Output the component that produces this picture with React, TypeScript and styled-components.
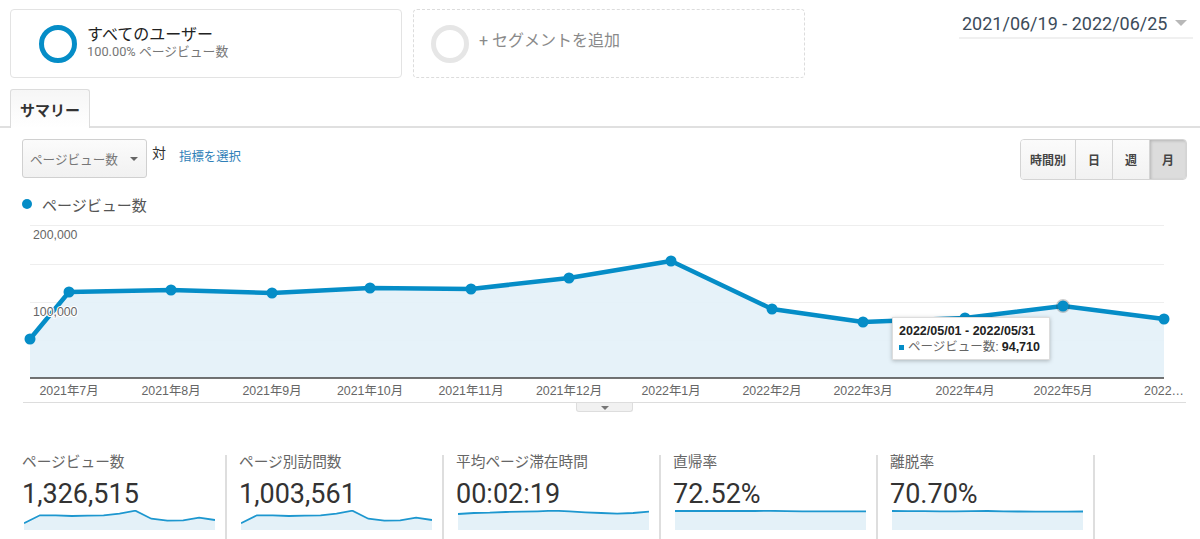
import * as React from 'react'
import styled, { createGlobalStyle } from 'styled-components'

const BLUE = '#058dc7'
const FILL = '#e4f1f8'

const GlobalStyle = createGlobalStyle`
  html, body {
    margin: 0;
    padding: 0;
    background: #fff;
    overflow: hidden;
  }
  body {
    font-family: Roboto, 'Noto Sans CJK JP', sans-serif;
    color: #333;
  }
`

const points: [number, number][] = [
  [30, 339], [69, 292], [171, 290], [272, 293], [370, 288], [471, 289], [569, 278],
  [671, 261], [772, 309], [863, 322], [965, 318], [1063, 306], [1164, 319],
]

const axisLabels: [string, number][] = [
  ['2021年7月', 69], ['2021年8月', 171], ['2021年9月', 272], ['2021年10月', 370],
  ['2021年11月', 471], ['2021年12月', 569], ['2022年1月', 671], ['2022年2月', 772],
  ['2022年3月', 863], ['2022年4月', 965], ['2022年5月', 1063], ['2022…', 1164],
]

const pageviewSpark = [13.3, 5.3, 5.3, 6, 5.7, 5.3, 3.7, 0.7, 8.7, 10.7, 10.3, 7.7, 10]

const metrics = [
  { label: 'ページビュー数', value: '1,326,515', spark: pageviewSpark },
  { label: 'ページ別訪問数', value: '1,003,561', spark: pageviewSpark },
  { label: '平均ページ滞在時間', value: '00:02:19', spark: [4, 3, 2.7, 2, 1.7, 1.3, 0.7, 1.3, 2.3, 3, 3.7, 3, 1.7] },
  { label: '直帰率', value: '72.52%', spark: [1, 1, 1, 1, 1, 1, 0.8, 1.2, 1.3, 1.3, 1.4, 1.4, 1.4] },
  { label: '離脱率', value: '70.70%', spark: [1, 1.1, 1.2, 1.3, 1.3, 1.2, 1, 1.4, 1.5, 1.6, 1.7, 1.7, 1.5] },
]

const Sparkline: React.FC<{ values: number[] }> = ({ values }) => {
  const step = 191 / (values.length - 1)
  const line = values.map((v, i) => `${(i * step).toFixed(1)},${v}`).join(' ')
  return (
    <SparkSvg width={191} height={20} viewBox="0 0 191 20">
      <polygon points={`0,20 ${line} 191,20`} fill={FILL} />
      <polyline points={line} fill="none" stroke="#1d97cf" strokeWidth={1.8} />
    </SparkSvg>
  )
}

const App: React.FC = () => {
  const linePoints = points.map(p => p.join(',')).join(' ')
  return (
    <Page>
      <GlobalStyle />
      <TopRow>
        <SegmentCard>
          <Ring $color={BLUE} />
          <SegmentText>
            <SegmentName>すべてのユーザー</SegmentName>
            <SegmentSub>100.00% ページビュー数</SegmentSub>
          </SegmentText>
        </SegmentCard>
        <AddSegmentCard>
          <Ring $color="#e6e6e6" />
          <AddLabel>+ セグメントを追加</AddLabel>
        </AddSegmentCard>
        <DateRange>
          2021/06/19 - 2022/06/25
          <DateCaret />
        </DateRange>
      </TopRow>

      <TabBar>
        <Tab>サマリー</Tab>
      </TabBar>

      <Controls>
        <MetricSelect>
          ページビュー数
          <SelectCaret />
        </MetricSelect>
        <VsLabel>対</VsLabel>
        <MetricLink>指標を選択</MetricLink>
        <Periods>
          <PeriodButton>時間別</PeriodButton>
          <PeriodButton>日</PeriodButton>
          <PeriodButton>週</PeriodButton>
          <PeriodButton $active>月</PeriodButton>
        </Periods>
      </Controls>

      <Legend>
        <LegendDot />
        ページビュー数
      </Legend>

      <ChartWrap>
        <svg width={1163} height={180} viewBox="23 222 1163 180">
          {[225, 264, 302, 340].map(y => (
            <line key={y} x1={30} x2={1164} y1={y + 0.5} y2={y + 0.5} stroke="#eeeeee" />
          ))}
          <polygon points={`30,378 ${linePoints} 1164,378`} fill={FILL} fillOpacity={0.92} />
          <line x1={30} x2={1164} y1={378} y2={378} stroke="#444" strokeWidth={1.4} />
          <polyline points={linePoints} fill="none" stroke={BLUE} strokeWidth={4.5} strokeLinejoin="round" />
          <circle cx={1063} cy={306} r={7} fill="#333" fillOpacity={0.25} />
          {points.map(([x, y]) => (
            <circle key={x} cx={x} cy={y} r={5.5} fill={BLUE} />
          ))}
          <YLabel x={33} y={239}>200,000</YLabel>
          <YLabel x={33} y={316}>100,000</YLabel>
          {axisLabels.map(([text, x]) => (
            <XLabel key={text} x={x} y={395}>{text}</XLabel>
          ))}
        </svg>
        <Tooltip>
          <TooltipDate>2022/05/01 - 2022/05/31</TooltipDate>
          <TooltipRow>
            <TooltipSwatch />
            ページビュー数: <strong>94,710</strong>
          </TooltipRow>
        </Tooltip>
      </ChartWrap>

      <HandleRow>
        <Handle />
      </HandleRow>

      <Metrics>
        {metrics.map(m => (
          <Metric key={m.label}>
            <MetricLabel>{m.label}</MetricLabel>
            <MetricValue>{m.value}</MetricValue>
            <Sparkline values={m.spark} />
          </Metric>
        ))}
      </Metrics>
    </Page>
  )
}

const Page = styled.div`
  width: 1200px;
  height: 539px;
  overflow: hidden;
`

const TopRow = styled.div`
  display: flex;
  align-items: flex-start;
  gap: 11px;
  padding: 9px 7px 0 10px;
`

const SegmentCard = styled.div`
  box-sizing: border-box;
  display: flex;
  align-items: center;
  width: 392px;
  height: 69px;
  padding-left: 28px;
  border: 1px solid #e3e3e3;
  border-radius: 4px;
`

const AddSegmentCard = styled(SegmentCard)`
  width: 392px;
  padding-left: 17px;
  border: 1px dashed #dcdcdc;
`

const Ring = styled.div<{ $color: string }>`
  box-sizing: border-box;
  flex-shrink: 0;
  width: 38px;
  height: 38px;
  margin-right: 10px;
  border: 5px solid ${p => p.$color};
  border-radius: 50%;
`

const SegmentText = styled.div`
  display: flex;
  flex-direction: column;
  margin-top: -2px;
`

const SegmentName = styled.div`
  font-size: 16px;
  line-height: 19px;
  color: #222;
`

const SegmentSub = styled.div`
  font-size: 12.8px;
  line-height: 16px;
  color: #777;
`

const AddLabel = styled.div`
  margin-top: -10px;
  font-size: 16px;
  color: #8a8a8a;
`

const DateRange = styled.div`
  display: flex;
  align-items: center;
  box-sizing: border-box;
  width: 234px;
  height: 30px;
  margin-left: auto;
  padding-left: 3px;
  border-bottom: 2px solid #f0f0f0;
  font-size: 18px;
  white-space: nowrap;
  color: #3c4b5a;
`

const DateCaret = styled.span`
  flex-shrink: 0;
  width: 0;
  height: 0;
  margin-left: 8px;
  border-left: 6px solid transparent;
  border-right: 6px solid transparent;
  border-top: 6px solid #b8b8b8;
`

const TabBar = styled.div`
  display: flex;
  height: 37px;
  margin-top: 11px;
  padding-left: 10px;
  border-bottom: 2px solid #e0e0e0;
`

const Tab = styled.div`
  box-sizing: border-box;
  display: flex;
  align-items: center;
  justify-content: center;
  width: 80px;
  height: 39px;
  border: 1px solid #dcdcdc;
  border-bottom: none;
  border-radius: 3px 3px 0 0;
  background: linear-gradient(#f6f6f6, #fff);
  font-size: 15px;
  font-weight: 700;
  color: #333;
`

const Controls = styled.div`
  display: flex;
  align-items: flex-start;
  height: 39px;
  margin-top: 11px;
  padding: 0 13px 0 22px;
`

const MetricSelect = styled.div`
  box-sizing: border-box;
  display: flex;
  align-items: center;
  justify-content: space-between;
  width: 125px;
  height: 39px;
  padding: 0 8px 0 7px;
  border: 1px solid #d0d0d0;
  border-radius: 3px;
  background: linear-gradient(#fbfbfb, #f1f1f1);
  font-size: 12.6px;
  color: #777;
`

const SelectCaret = styled.span`
  width: 0;
  height: 0;
  border-left: 4px solid transparent;
  border-right: 4px solid transparent;
  border-top: 4px solid #666;
`

const VsLabel = styled.span`
  margin: 5px 0 0 5px;
  font-size: 14px;
  line-height: 18px;
  color: #333;
`

const MetricLink = styled.span`
  margin: 9px 0 0 13px;
  font-size: 12.4px;
  line-height: 18px;
  color: #2f7fb8;
`

const Periods = styled.div`
  display: flex;
  height: 39px;
  margin-left: auto;
  border: 1px solid #d4d4d4;
  border-radius: 4px;
  overflow: hidden;
`

const PeriodButton = styled.div<{ $active?: boolean }>`
  display: flex;
  align-items: center;
  justify-content: center;
  padding: 0 12px;
  border-left: 1px solid #d4d4d4;
  background: ${p => (p.$active ? '#dcdcdc' : 'linear-gradient(#fbfbfb, #f2f2f2)')};
  box-shadow: ${p => (p.$active ? 'inset 1px 1px 3px rgba(0, 0, 0, 0.18)' : 'none')};
  font-size: 12px;
  font-weight: 700;
  color: #444;
  &:first-child {
    border-left: none;
    padding: 0 9px;
  }
`

const Legend = styled.div`
  display: flex;
  align-items: center;
  gap: 10px;
  height: 18px;
  margin: 17px 0 9px 22px;
  font-size: 15px;
  color: #555;
`

const LegendDot = styled.span`
  width: 10px;
  height: 10px;
  border-radius: 50%;
  background: ${BLUE};
`

const ChartWrap = styled.div`
  position: relative;
  width: 1163px;
  height: 180px;
  margin-left: 23px;
  border-bottom: 1px solid #ddd;
  svg {
    display: block;
    overflow: visible;
  }
`

const YLabel = styled.text`
  font-family: 'Liberation Sans', sans-serif;
  font-size: 12.3px;
  fill: #666;
  paint-order: stroke;
  stroke: #fff;
  stroke-width: 2px;
`

const XLabel = styled.text`
  font-family: 'Liberation Sans', 'Noto Sans CJK JP', sans-serif;
  font-size: 12.4px;
  fill: #666;
  text-anchor: middle;
`

const Tooltip = styled.div`
  position: absolute;
  left: 869px;
  top: 95px;
  box-sizing: border-box;
  width: 158px;
  height: 43px;
  padding: 6px 6px;
  border: 1px solid #ddd;
  background: #fff;
  box-shadow: 0 1px 4px rgba(0, 0, 0, 0.25);
  font-family: 'Liberation Sans', 'Noto Sans CJK JP', sans-serif;
  font-size: 12.5px;
  line-height: 15px;
  color: #666;
  white-space: nowrap;
  strong {
    color: #222;
    margin-left: 3px;
  }
`

const TooltipDate = styled.div`
  font-weight: 700;
  color: #222;
`

const TooltipRow = styled.div`
  display: flex;
  align-items: center;
  margin-top: 1px;
`

const TooltipSwatch = styled.span`
  width: 5px;
  height: 5px;
  margin-right: 4px;
  background: ${BLUE};
`

const HandleRow = styled.div`
  display: flex;
  justify-content: center;
  width: 1163px;
  margin-left: 23px;
`

const Handle = styled.div`
  display: flex;
  justify-content: center;
  padding-top: 3px;
  box-sizing: border-box;
  width: 57px;
  height: 9px;
  border: 1px solid #ddd;
  border-top: none;
  border-radius: 0 0 3px 3px;
  background: #f1f1f1;
  &::after {
    content: '';
    width: 0;
    height: 0;
    border-left: 4px solid transparent;
    border-right: 4px solid transparent;
    border-top: 4px solid #777;
  }
`

const Metrics = styled.div`
  display: flex;
  margin: 43px 0 0 10px;
`

const Metric = styled.div`
  box-sizing: border-box;
  width: 217px;
  height: 84px;
  padding-left: 12px;
  border-right: 2px solid #dedede;
`

const MetricLabel = styled.div`
  margin-top: -1px;
  font-size: 14.7px;
  line-height: 16px;
  color: #666;
`

const MetricValue = styled.div`
  margin-top: 9px;
  font-size: 27px;
  line-height: 30px;
  color: #333;
`

const SparkSvg = styled.svg`
  display: block;
  margin: 1px 0 0 2px;
`

export default App
